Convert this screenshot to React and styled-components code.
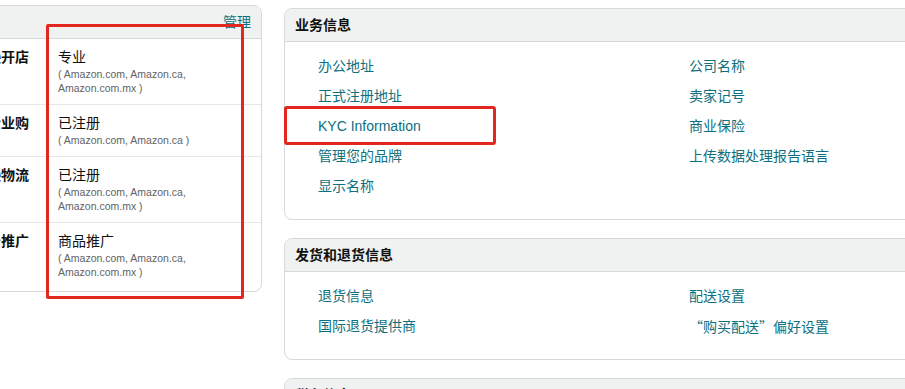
import React from "react"
import styled, { createGlobalStyle } from "styled-components"

const Colors = {
  Ink: "#0f1111",
  Muted: "#5f6363",
  Link: "#0e6f7e",
  Border: "#d5d9d9",
  HeaderBg: "#f0f2f2",
  Rule: "#e7e7e7",
  Mark: "#e3261f",
}

const services = [
  { label: "在亚马逊开店", value: "专业", markets: "( Amazon.com, Amazon.ca, Amazon.com.mx )" },
  { label: "亚马逊企业购", value: "已注册", markets: "( Amazon.com, Amazon.ca )" },
  { label: "亚马逊物流", value: "已注册", markets: "( Amazon.com, Amazon.ca, Amazon.com.mx )" },
  { label: "广告推广", value: "商品推广", markets: "( Amazon.com, Amazon.ca, Amazon.com.mx )" },
]

const businessLeft = ["办公地址", "正式注册地址", "KYC Information", "管理您的品牌", "显示名称"]
const businessRight = ["公司名称", "卖家记号", "商业保险", "上传数据处理报告语言"]
const shippingLeft = ["退货信息", "国际退货提供商"]
const shippingRight = ["配送设置", "“购买配送”偏好设置"]

const App = () => {
  return (
    <>
      <GlobalStyle />
      <Page>
        <LeftColumn>
          <Card>
            <CardHeader>
              <HeaderTitle>您的服务</HeaderTitle>
              <HeaderLink href="#">管理</HeaderLink>
            </CardHeader>
            <ServiceList>
              {services.map((s) => (
                <ServiceRow key={s.label}>
                  <ServiceLabel>{s.label}</ServiceLabel>
                  <ServiceValue>
                    <div>{s.value}</div>
                    <Markets>{s.markets}</Markets>
                  </ServiceValue>
                </ServiceRow>
              ))}
            </ServiceList>
          </Card>
          <MarkBox />
        </LeftColumn>

        <RightColumn>
          <Card>
            <CardHeader>
              <HeaderTitle>业务信息</HeaderTitle>
            </CardHeader>
            <LinkGrid>
              <LinkColumn>
                {businessLeft.map((l) => (
                  <LinkItem key={l}>
                    <TextLink href="#">{l}</TextLink>
                    {l === "KYC Information" && <RowMark />}
                  </LinkItem>
                ))}
              </LinkColumn>
              <LinkColumn>
                {businessRight.map((l) => (
                  <LinkItem key={l}>
                    <TextLink href="#">{l}</TextLink>
                  </LinkItem>
                ))}
              </LinkColumn>
            </LinkGrid>
          </Card>

          <Card>
            <CardHeader>
              <HeaderTitle>发货和退货信息</HeaderTitle>
            </CardHeader>
            <LinkGrid>
              <LinkColumn>
                {shippingLeft.map((l) => (
                  <LinkItem key={l}>
                    <TextLink href="#">{l}</TextLink>
                  </LinkItem>
                ))}
              </LinkColumn>
              <LinkColumn>
                {shippingRight.map((l) => (
                  <LinkItem key={l}>
                    <TextLink href="#" $cjk={l.startsWith("“")}>{l}</TextLink>
                  </LinkItem>
                ))}
              </LinkColumn>
            </LinkGrid>
          </Card>

          <Card>
            <CardHeader>
              <HeaderTitle>税务信息</HeaderTitle>
            </CardHeader>
            <LinkGrid>
              <LinkColumn>
                <LinkItem>
                  <TextLink href="#">税务信息</TextLink>
                </LinkItem>
              </LinkColumn>
            </LinkGrid>
          </Card>
        </RightColumn>
      </Page>
    </>
  )
}
export default App

const GlobalStyle = createGlobalStyle`
  html, body {
    margin: 0;
    padding: 0;
    background: #ffffff;
    overflow: hidden;
  }
  body {
    font-family: "Liberation Sans", "Noto Sans CJK SC", Arial, sans-serif;
    color: ${Colors.Ink};
    font-size: 14px;
  }
  * {
    box-sizing: border-box;
  }
`

const Page = styled.div`
  display: flex;
  align-items: flex-start;
  gap: 22px;
  margin-left: -108px;
  padding-top: 5px;
  width: 1300px;
`

const LeftColumn = styled.div`
  position: relative;
  width: 370px;
  flex-shrink: 0;
`

const RightColumn = styled.div`
  display: flex;
  flex-direction: column;
  gap: 18px;
  width: 810px;
  flex-shrink: 0;
  padding-top: 3px;
`

const Card = styled.div`
  border: 1px solid ${Colors.Border};
  border-radius: 8px;
  background: #ffffff;
`

const CardHeader = styled.div`
  display: flex;
  align-items: center;
  justify-content: space-between;
  height: 33px;
  padding: 0 10px;
  background: ${Colors.HeaderBg};
  border-bottom: 1px solid ${Colors.Border};
  border-radius: 7px 7px 0 0;
`

const HeaderTitle = styled.div`
  font-size: 14px;
  font-weight: 700;
  line-height: 18px;
`

const HeaderLink = styled.a`
  color: ${Colors.Link};
  text-decoration: none;
  font-size: 14px;
  line-height: 18px;
`

const ServiceList = styled.div`
  padding-bottom: 3px;
`

const ServiceRow = styled.div`
  display: grid;
  grid-template-columns: 136px 1fr;
  column-gap: 29px;
  padding: 9px 40px 9px 0;
  border-bottom: 1px solid ${Colors.Rule};

  &:last-child {
    border-bottom: none;
  }
`

const ServiceLabel = styled.div`
  text-align: right;
  font-weight: 700;
  line-height: 18px;
`

const ServiceValue = styled.div`
  line-height: 18px;
`

const Markets = styled.div`
  margin-top: 1px;
  font-size: 10.5px;
  line-height: 14px;
  color: ${Colors.Muted};
`

const MarkBox = styled.div`
  position: absolute;
  left: 154px;
  top: 19px;
  width: 198px;
  height: 275px;
  border: 3px solid ${Colors.Mark};
  border-radius: 2px;
  pointer-events: none;
`

const LinkGrid = styled.div`
  display: grid;
  grid-template-columns: 371px 371px;
  padding: 9px 33px 18px;
`

const LinkColumn = styled.div`
  display: flex;
  flex-direction: column;
`

const LinkItem = styled.div`
  position: relative;
  height: 30px;
  display: flex;
  align-items: center;
`

const TextLink = styled.a`
  color: ${Colors.Link};
  text-decoration: none;
  font-size: 14px;
  line-height: 18px;
  font-family: ${(p) =>
    p.$cjk ? `"Noto Sans CJK SC", sans-serif` : `"Liberation Sans", "Noto Sans CJK SC", Arial, sans-serif`};
`

const RowMark = styled.span`
  position: absolute;
  left: -34px;
  top: -5px;
  width: 212px;
  height: 39px;
  border: 3px solid ${Colors.Mark};
  border-radius: 3px;
  pointer-events: none;
`
